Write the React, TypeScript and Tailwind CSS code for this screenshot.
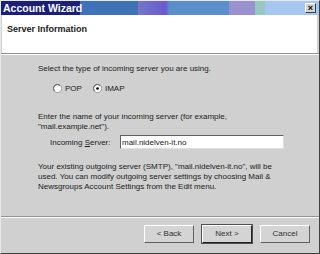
import React from "react";

function Radio({ checked }: { checked?: boolean }) {
  return (
    <svg width="9" height="9" viewBox="0 0 12 12" className="shrink-0">
      <circle cx="6" cy="6" r="5.5" fill="#ffffff" stroke="#808080" strokeWidth="1" />
      <path d="M2.2 9.5 A5 5 0 0 1 9.5 2.2" fill="none" stroke="#404040" strokeWidth="1" />
      {checked && <circle cx="6" cy="6" r="1.8" fill="#000000" />}
    </svg>
  );
}

function Btn({ label, def }: { label: string; def?: boolean }) {
  return (
    <div
      className={
        "w-[50px] h-[18px] flex items-center justify-center text-[8px] text-[#303030] bg-[#d4d4d4] border border-t-white border-l-white " +
        (def ? "border-r-[#202020] border-b-[#202020] outline outline-1 outline-[#505050]" : "border-r-[#606060] border-b-[#606060]")
      }
    >
      {label}
    </div>
  );
}

export default function App() {
  return (
    <div
      className="w-[320px] h-[254px] flex flex-col bg-[#d0d0d0] border border-t-[#e8e8e8] border-l-[#e8e8e8] border-r-[#404040] border-b-[#404040] overflow-hidden"
      style={{ fontFamily: '"Liberation Sans", Arial, sans-serif' }}
    >
      <div className="h-[14px] flex items-center justify-between pl-[2px] pr-[3px] bg-[linear-gradient(90deg,#1a1f7c_0px,#1a1f7c_79px,#3f72b6_79px,#3f72b6_137px,#7476c8_137px,#6a5ad0_165px,#5a8fcc_168px,#5a8fcc_228px,#9a92d0_228px,#9a92d0_254px,#96c8c0_254px,#96c8c0_264px,#a6c8f0_264px)]">
        <span className="text-white font-bold text-[10.5px] leading-none">Account Wizard</span>
        <div className="w-[11px] h-[10px] bg-[#d4d4d4] border border-t-white border-l-white border-r-[#404040] border-b-[#404040] flex items-center justify-center text-[9px] leading-none text-black font-bold">
          ×
        </div>
      </div>
      <div className="h-[38px] bg-white pl-[5px] pt-[10px] ml-[1px] mr-[2px] text-[9px] leading-none font-bold text-[#202020]">
        Server Information
      </div>
      <div className="h-[1px] bg-[#909090]" />
      <div className="h-[1px] bg-white" />
      <div className="flex-1 flex flex-col pl-[37px] pr-[20px] text-[8px] text-[#202020] leading-[9.6px]">
        <div className="mt-[9px]">Select the type of incoming server you are using.</div>
        <div className="mt-[10px] flex items-center pl-[15px]">
          <Radio />
          <span className="ml-[3px]">POP</span>
          <span className="ml-[11px]"><Radio checked /></span>
          <span className="ml-[3px]">IMAP</span>
        </div>
        <div className="mt-[19px]">
          Enter the name of your incoming server (for example,
          <br />
          "mail.example.net").
        </div>
        <div className="mt-[4px] flex items-center">
          <span className="pl-[12px] w-[82px]">
            Incoming <span className="underline">S</span>erver:
          </span>
          <div className="w-[164px] h-[14px] bg-white border border-t-[#606060] border-l-[#606060] border-r-[#e0e0e0] border-b-[#e0e0e0] flex items-center pl-[1px]">
            mail.nidelven-it.no
          </div>
        </div>
        <div className="mt-[13px]">
          Your existing outgoing server (SMTP), "mail.nidelven-it.no", will be
          <br />
          used. You can modify outgoing server settings by choosing Mail &amp;
          <br />
          Newsgroups Account Settings from the Edit menu.
        </div>
      </div>
      <div className="h-[1px] bg-[#909090]" />
      <div className="h-[1px] bg-white" />
      <div className="h-[35px] flex items-start justify-end pt-[7px] pr-[9px] gap-[8px]">
        <Btn label="< Back" />
        <Btn label="Next >" def />
        <Btn label="Cancel" />
      </div>
    </div>
  );
}
